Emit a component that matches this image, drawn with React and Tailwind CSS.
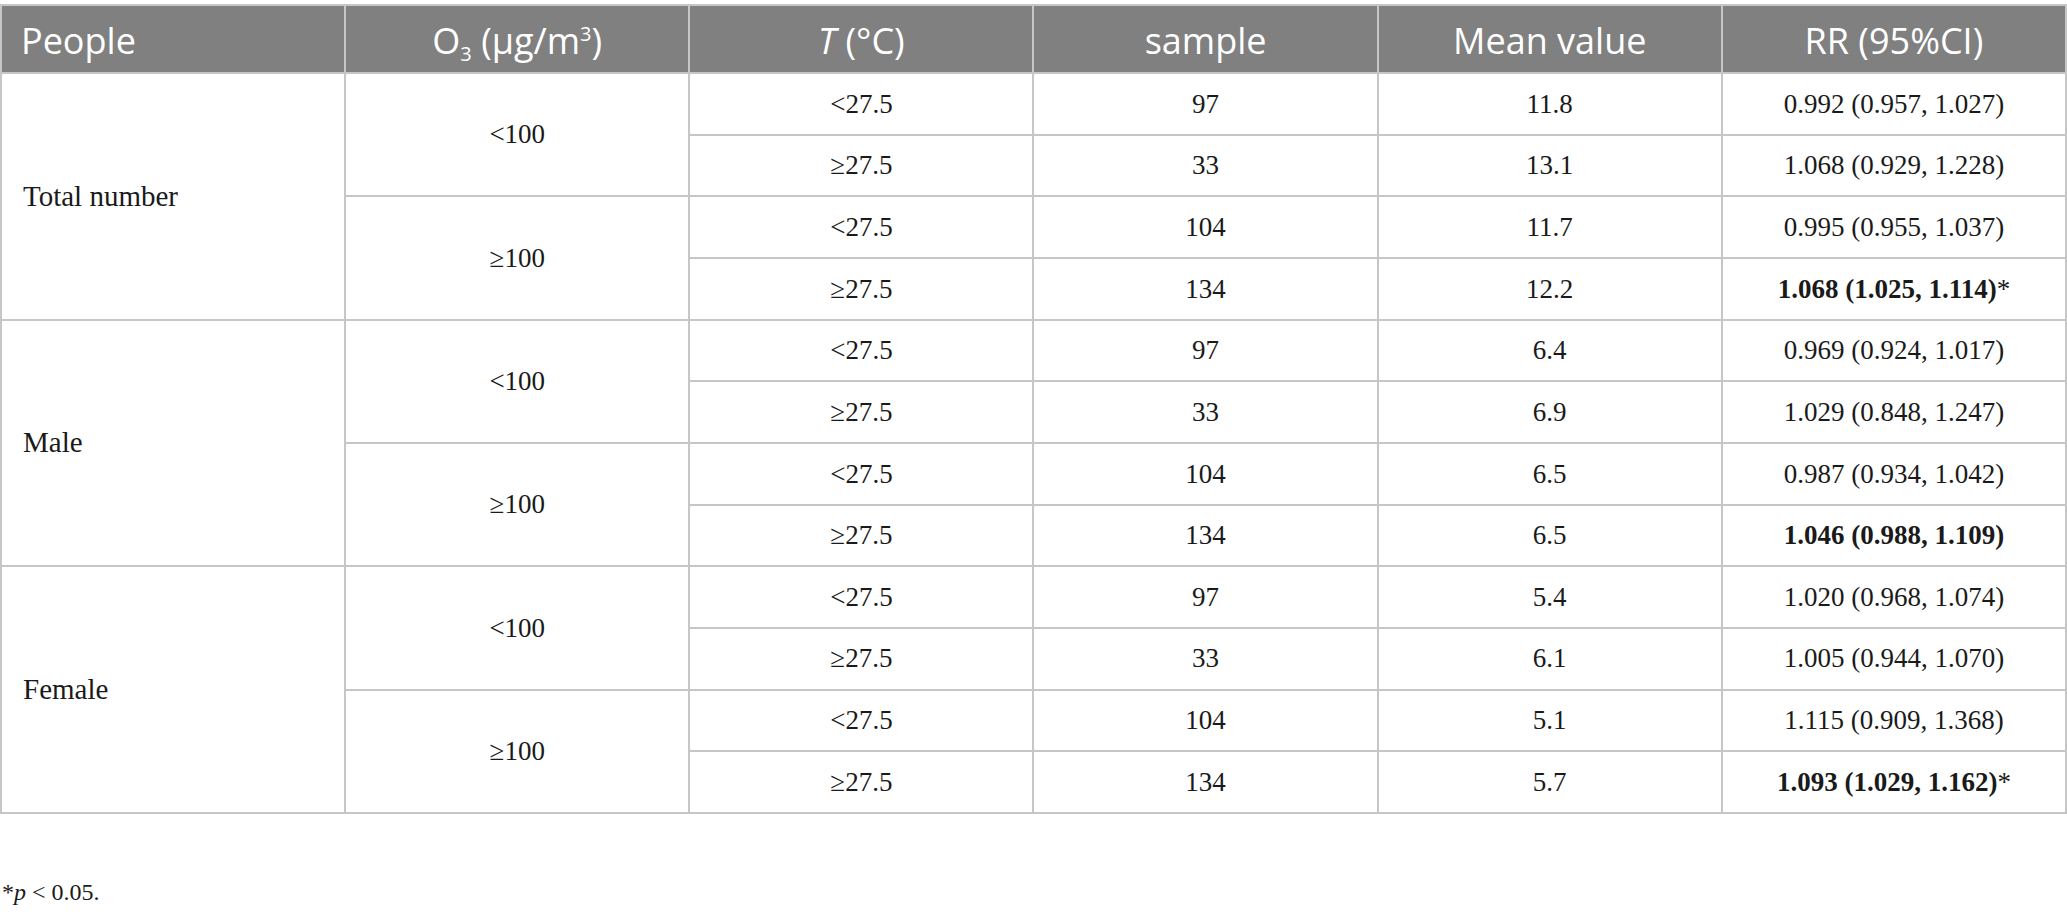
const groups = [
  {
    people: 'Total number',
    bands: [
      {
        o3: '<100',
        rows: [
          { t: '<27.5', n: '97', mean: '11.8', rr: '0.992 (0.957, 1.027)' },
          { t: '≥27.5', n: '33', mean: '13.1', rr: '1.068 (0.929, 1.228)' },
        ],
      },
      {
        o3: '≥100',
        rows: [
          { t: '<27.5', n: '104', mean: '11.7', rr: '0.995 (0.955, 1.037)' },
          { t: '≥27.5', n: '134', mean: '12.2', rr: '1.068 (1.025, 1.114)', bold: true, star: true },
        ],
      },
    ],
  },
  {
    people: 'Male',
    bands: [
      {
        o3: '<100',
        rows: [
          { t: '<27.5', n: '97', mean: '6.4', rr: '0.969 (0.924, 1.017)' },
          { t: '≥27.5', n: '33', mean: '6.9', rr: '1.029 (0.848, 1.247)' },
        ],
      },
      {
        o3: '≥100',
        rows: [
          { t: '<27.5', n: '104', mean: '6.5', rr: '0.987 (0.934, 1.042)' },
          { t: '≥27.5', n: '134', mean: '6.5', rr: '1.046 (0.988, 1.109)', bold: true },
        ],
      },
    ],
  },
  {
    people: 'Female',
    bands: [
      {
        o3: '<100',
        rows: [
          { t: '<27.5', n: '97', mean: '5.4', rr: '1.020 (0.968, 1.074)' },
          { t: '≥27.5', n: '33', mean: '6.1', rr: '1.005 (0.944, 1.070)' },
        ],
      },
      {
        o3: '≥100',
        rows: [
          { t: '<27.5', n: '104', mean: '5.1', rr: '1.115 (0.909, 1.368)' },
          { t: '≥27.5', n: '134', mean: '5.7', rr: '1.093 (1.029, 1.162)', bold: true, star: true },
        ],
      },
    ],
  },
]

const Head = ({ children, left }) => (
  <div
    className={`bg-[#808080] text-white text-[36px] font-['Open_Sans',sans-serif] flex items-center pt-[3px] ${
      left ? 'justify-start pl-[19px]' : 'justify-center'
    }`}
  >
    {children}
  </div>
)

const Cell = ({ children, className = '' }) => (
  <div className={`bg-white flex items-center justify-center ${className}`}>{children}</div>
)

export default function App() {
  return (
    <div className="bg-white w-[2067px] h-[918px] pt-[4px] font-['Liberation_Serif',serif] text-[#1a1a1a]">
      <div className="grid grid-cols-6 grid-rows-[66px_repeat(12,59.67px)] gap-[2px] p-[2px] bg-[#c6c6c6] text-[27px]">
        <Head left>People</Head>
        <Head>
          <span>
            O<sub className="text-[20px] align-baseline relative top-[7px]">3</sub> (μg/m
            <sup className="text-[20px] align-baseline relative -top-[13px]">3</sup>)
          </span>
        </Head>
        <Head>
          <span>
            <i>T</i> (°C)
          </span>
        </Head>
        <Head>sample</Head>
        <Head>Mean value</Head>
        <Head>RR (95%CI)</Head>

        {groups.map((g) => (
          <>
            <Cell key={g.people} className="row-span-4 !justify-start pl-[21px] text-[29px]">
              {g.people}
            </Cell>
            {g.bands.map((b, bi) => (
              <>
                <Cell key={g.people + bi} className="row-span-2 col-start-2">
                  {b.o3}
                </Cell>
                {b.rows.map((r, ri) => (
                  <>
                    <Cell key={'t' + ri} className="col-start-3">{r.t}</Cell>
                    <Cell key={'n' + ri}>{r.n}</Cell>
                    <Cell key={'m' + ri}>{r.mean}</Cell>
                    <Cell key={'r' + ri}>
                      <span className={r.bold ? 'font-bold' : ''}>{r.rr}</span>
                      {r.star && <span>*</span>}
                    </Cell>
                  </>
                ))}
              </>
            ))}
          </>
        ))}
      </div>
      <div className="mt-[66px] pl-[2px] text-[24px] leading-none">
        *<i>p</i> &lt; 0.05.
      </div>
    </div>
  )
}
